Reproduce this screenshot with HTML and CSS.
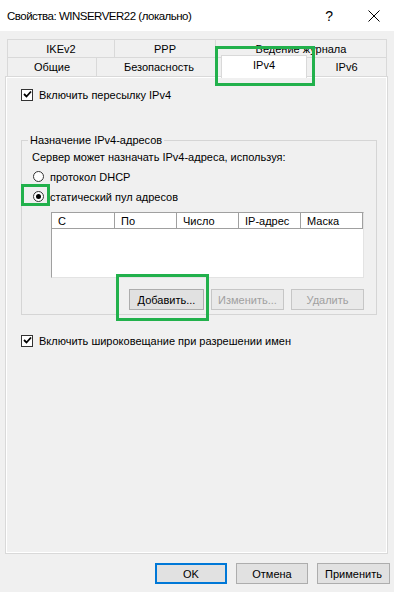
FILE: index.html
```html
<!DOCTYPE html>
<html lang="ru">
<head>
<meta charset="utf-8">
<title>Свойства</title>
<link rel="stylesheet" href="styles.css">
</head>
<body>
<div class="titlebar">
  <span class="title">Свойства: WINSERVER22 (локально)</span>
  <span class="help">?</span>
  <svg class="close" width="12" height="12" viewBox="0 0 12 12"><path d="M0.5 0.5 L11.5 11.5 M11.5 0.5 L0.5 11.5" stroke="#000" stroke-width="1" fill="none"/></svg>
</div>
<div class="dialog">
  <div class="tabs">
    <div class="tabrow row1">
      <div class="tab t-ike">IKEv2</div>
      <div class="tab t-ppp">PPP</div>
      <div class="tab t-log last">Ведение журнала</div>
    </div>
    <div class="tabrow row2">
      <div class="tab t-gen">Общие</div>
      <div class="tab t-sec">Безопасность</div>
      <div class="tab t-ipv4 sel">IPv4</div>
      <div class="tab t-ipv6 last">IPv6</div>
    </div>
  </div>
  <div class="panel">
    <label class="check first">
      <span class="box"><svg width="9" height="9" viewBox="0 0 9 9"><path d="M1 4 L3.5 6.5 L8 1.5" stroke="#000" stroke-width="1.8" fill="none"/></svg></span>
      <span>Включить пересылку IPv4</span>
    </label>
    <fieldset class="group">
      <legend>Назначение IPv4-адресов</legend>
      <div class="desc">Сервер может назначать IPv4-адреса, используя:</div>
      <div class="radio r1"><span class="circle"></span><span>протокол DHCP</span></div>
      <div class="radio r2"><span class="circle on"><span class="dot"></span></span><span>статический пул адресов</span></div>
      <div class="list">
        <div class="lhead">
          <div class="col">С</div>
          <div class="col">По</div>
          <div class="col">Число</div>
          <div class="col">IP-адрес</div>
          <div class="col">Маска</div>
        </div>
      </div>
      <div class="btnrow">
        <button class="btn b-add">Добавить...</button>
        <button class="btn dis">Изменить...</button>
        <button class="btn dis">Удалить</button>
      </div>
    </fieldset>
    <label class="check second">
      <span class="box"><svg width="9" height="9" viewBox="0 0 9 9"><path d="M1 4 L3.5 6.5 L8 1.5" stroke="#000" stroke-width="1.8" fill="none"/></svg></span>
      <span>Включить широковещание при разрешении имен</span>
    </label>
  </div>
  <div class="footer">
    <button class="btn fbtn default">OK</button>
    <button class="btn fbtn">Отмена</button>
    <button class="btn fbtn apply">Применить</button>
  </div>
</div>
<div class="mark m1"></div>
<div class="mark m2"></div>
<div class="mark m3"></div>
</body>
</html>
```

FILE: styles.css
```css
* { box-sizing: border-box; }
html, body { margin: 0; padding: 0; }
body {
  width: 394px;
  height: 592px;
  background: #f0f0f0;
  font-family: "Liberation Sans", Arial, sans-serif;
  font-size: 11px;
  color: #000;
  position: relative;
  overflow: hidden;
}
.titlebar {
  height: 31px;
  background: #fff;
  display: flex;
  align-items: center;
  padding-left: 7px;
}
.title { font-size: 11.5px; letter-spacing: -0.5px; flex: 1; }
.help { font-size: 14px; margin-right: 35px; }
.close { margin-right: 14px; }

.dialog { padding-left: 5px; }
.tabs { margin-left: 2px; margin-top: 8px; width: 380px; }
.tabrow { display: flex; }
.row1 { height: 18px; }
.row2 { height: 19px; align-items: flex-start; }
.tab {
  border-top: 1px solid #d9d9d9;
  border-left: 1px solid #d9d9d9;
  background: #f0f0f0;
  display: flex;
  justify-content: center;
  align-items: center;
  font-size: 11px;
}
.tab.last { border-right: 1px solid #d9d9d9; }
.row1 .tab { height: 18px; }
.row2 .tab { height: 19px; }
.t-ike { width: 107px; }
.t-ppp { width: 101px; }
.t-log { width: 172px; }
.t-gen { width: 89px; }
.t-sec { width: 125px; }
.t-ipv4 { width: 86px; }
.t-ipv6 { width: 80px; }
.row2 .tab.sel {
  background: #fff;
  height: 23px;
  margin-top: -2px;
  border-right: 1px solid #d9d9d9;
  position: relative;
  z-index: 2;
  align-items: flex-start;
  padding-top: 3px;
}
.row2 .tab.sel + .tab { border-left: none; }

.panel {
  width: 383px;
  height: 478px;
  margin-left: 0;
  border: 1px solid #d9d9d9;
  box-shadow: inset 0 0 0 1px #fff;
  padding: 0 0 0 15px;
  position: relative;
  z-index: 1;
}
.check {
  display: flex;
  align-items: center;
  gap: 6px;
  height: 13px;
}
.check.first { margin-top: 11px; }
.check.second { margin-top: 19px; }
.box {
  width: 12px;
  height: 12px;
  border: 1px solid #333;
  background: #fff;
  display: flex;
  align-items: center;
  justify-content: center;
}
.group {
  margin: 33px 0 0 0;
  width: 356px;
  height: 181px;
  border: 1px solid #d5d5d5;
  padding: 0 0 0 10px;
  min-width: 0;
}
.group legend {
  padding: 0 2px;
  margin-left: -4px;
  font-size: 11px;
  line-height: 13px;
}
.desc { margin-top: 4px; line-height: 13px; }
.radio {
  display: flex;
  align-items: center;
  gap: 6px;
  height: 13px;
  margin-left: 1px;
}
.r1 { margin-top: 6px; }
.r2 { margin-top: 7px; }
.circle {
  width: 11px;
  height: 11px;
  border-radius: 50%;
  border: 1px solid #333;
  background: #fff;
  display: flex;
  align-items: center;
  justify-content: center;
}
.dot { width: 5px; height: 5px; border-radius: 50%; background: #000; }
.list {
  margin: 9px 0 0 19px;
  width: 313px;
  height: 66px;
  background: #fff;
  border-top: 1px solid #a0a0a0;
  border-left: 1px solid #a0a0a0;
  border-right: 1px solid #e3e3e3;
  border-bottom: 1px solid #e3e3e3;
}
.lhead { display: flex; height: 16px; }
.col {
  width: 62px;
  height: 16px;
  border-right: 1px solid #a0a0a0;
  border-bottom: 1px solid #a0a0a0;
  box-shadow: inset 1px 1px 0 #fff;
  padding-left: 6px;
  line-height: 16px;
}
.col:first-child { width: 63px; }
.btnrow {
  display: flex;
  justify-content: flex-end;
  gap: 7px;
  margin-top: 11px;
  margin-right: 12px;
}
.btn {
  font-family: "Liberation Sans", Arial, sans-serif;
  font-size: 11px;
  color: #000;
  background: #e1e1e1;
  border: 1px solid #adadad;
  height: 21px;
  padding: 0;
  margin: 0;
}
.b-add { width: 75px; }
.btn.dis { width: 73px; color: #a0a0a0; background: #e9e9e9; border-color: #c6c6c6; }

.footer {
  display: flex;
  justify-content: flex-end;
  gap: 9px;
  margin-top: 9px;
  margin-right: 4px;
}
.fbtn { width: 72px; height: 21px; }
.fbtn.apply { width: 73px; }
.fbtn.default { border: 2px solid #0078d7; }

.mark {
  position: absolute;
  border: 3px solid #22b14c;
  z-index: 5;
}
.m1 { left: 215px; top: 46px; width: 100px; height: 40px; }
.m2 { left: 21px; top: 184px; width: 29px; height: 22px; }
.m3 { left: 116px; top: 274px; width: 93px; height: 47px; }
```
